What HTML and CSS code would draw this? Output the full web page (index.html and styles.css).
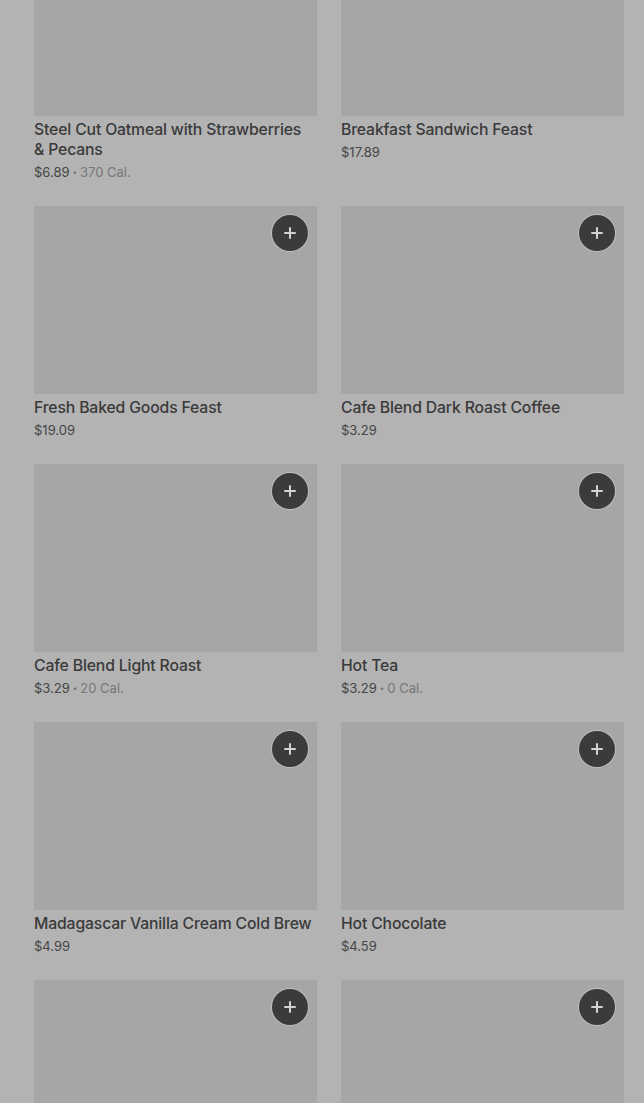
FILE: index.html
```html
<!DOCTYPE html>
<html>
<head>
<meta charset="utf-8">
<link rel="stylesheet" href="styles.css">
</head>
<body>
<div class="page">
  <div class="grid">
    <div class="card">
      <div class="thumb"></div>
      <div class="title">Steel Cut Oatmeal with Strawberries &amp;&nbsp;Pecans</div>
      <div class="meta"><span class="price">$6.89</span><span class="sep">•</span><span class="cal">370 Cal.</span></div>
    </div>
    <div class="card">
      <div class="thumb"></div>
      <div class="title">Breakfast Sandwich Feast</div>
      <div class="meta"><span class="price">$17.89</span></div>
    </div>
    <div class="card">
      <div class="thumb"><span class="add"></span></div>
      <div class="title">Fresh Baked Goods Feast</div>
      <div class="meta"><span class="price">$19.09</span></div>
    </div>
    <div class="card">
      <div class="thumb"><span class="add"></span></div>
      <div class="title">Cafe Blend Dark Roast Coffee</div>
      <div class="meta"><span class="price">$3.29</span></div>
    </div>
    <div class="card">
      <div class="thumb"><span class="add"></span></div>
      <div class="title">Cafe Blend Light Roast</div>
      <div class="meta"><span class="price">$3.29</span><span class="sep">•</span><span class="cal">20 Cal.</span></div>
    </div>
    <div class="card">
      <div class="thumb"><span class="add"></span></div>
      <div class="title">Hot Tea</div>
      <div class="meta"><span class="price">$3.29</span><span class="sep">•</span><span class="cal">0 Cal.</span></div>
    </div>
    <div class="card">
      <div class="thumb"><span class="add"></span></div>
      <div class="title">Madagascar Vanilla Cream Cold Brew</div>
      <div class="meta"><span class="price">$4.99</span></div>
    </div>
    <div class="card">
      <div class="thumb"><span class="add"></span></div>
      <div class="title">Hot Chocolate</div>
      <div class="meta"><span class="price">$4.59</span></div>
    </div>
    <div class="card">
      <div class="thumb"><span class="add"></span></div>
    </div>
    <div class="card">
      <div class="thumb"><span class="add"></span></div>
    </div>
  </div>
</div>
</body>
</html>
```

FILE: styles.css
```css
html, body {
  margin: 0;
  padding: 0;
  background: #b3b3b3;
  overflow: hidden;
}
.page {
  height: 1103px;
  overflow: hidden;
  font-family: Inter, Roboto, "Liberation Sans", Arial, sans-serif;
}
.grid {
  margin-top: -72px;
  padding: 0 20px 0 34px;
  display: grid;
  grid-template-columns: 283px 283px;
  column-gap: 24px;
  row-gap: 25px;
  align-items: start;
}
.card {
  display: flex;
  flex-direction: column;
}
.thumb {
  position: relative;
  height: 188px;
  background: #a6a6a6;
}
.add {
  position: absolute;
  top: 9px;
  right: 9px;
  width: 36px;
  height: 36px;
  border-radius: 50%;
  background: #3b3b3b;
  box-shadow: 0 0 0 1px #bdbdbd;
}
.add::before,
.add::after {
  content: "";
  position: absolute;
  left: 50%;
  top: 50%;
  background: #d2d2d2;
  border-radius: 1px;
}
.add::before {
  width: 12px;
  height: 2px;
  margin: -1px 0 0 -6px;
}
.add::after {
  width: 2px;
  height: 12px;
  margin: -6px 0 0 -1px;
}
.title {
  margin-top: 4px;
  font-size: 15.75px;
  line-height: 20px;
  font-weight: 500;
  letter-spacing: -0.15px;
  color: #3a3a3a;
}
.meta {
  margin-top: 3px;
  display: flex;
  align-items: center;
  font-size: 13px;
  line-height: 18px;
  color: #454545;
}
.sep {
  font-size: 8px;
  margin: 0 3px;
  color: #727272;
}
.cal {
  color: #777777;
}
```
